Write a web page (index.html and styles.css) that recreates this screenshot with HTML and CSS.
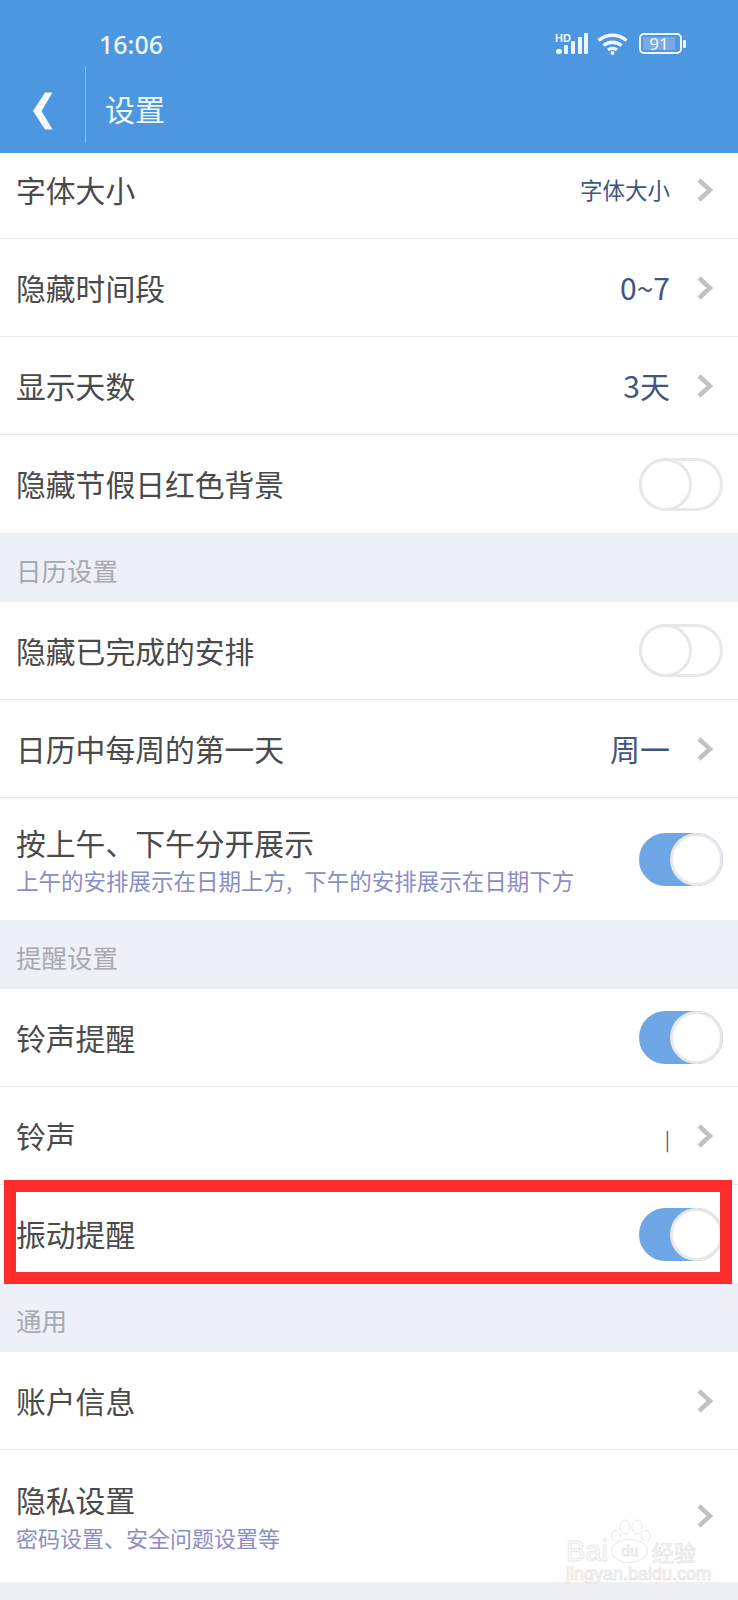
FILE: index.html
```html
<!DOCTYPE html>
<html lang="zh-CN">
  <head>
    <meta charset="utf-8" />
    <title>设置</title>
    <link rel="stylesheet" href="styles.css" />
  </head>
  <body>
    <header class="topbar">
      <div class="statusbar">
        <span class="time">16:06</span>
        <div class="status-icons">
          <svg class="signal" width="33" height="21" viewBox="0 0 33 21">
            <text x="0" y="9" class="hd">HD</text>
            <rect x="1" y="16" width="6" height="5" rx="2.5" />
            <rect x="9" y="12" width="4" height="9" rx="1" />
            <rect x="16" y="8" width="4" height="13" rx="1" />
            <rect x="23" y="4" width="4" height="17" rx="1" />
            <rect x="29" y="0" width="4" height="21" rx="1" />
          </svg>
          <svg class="wifi" width="31" height="22" viewBox="0 0 31 22">
            <path d="M1.5 7.5C9.5 0.5 21.5 0.5 29.5 7.5" />
            <path d="M6.5 12.5C11.5 8 19.5 8 24.5 12.5" />
            <path d="M11 17C13.5 15 17.5 15 20 17" />
            <circle cx="15.5" cy="20" r="2" />
          </svg>
          <div class="battery">
            <div class="battery-body"><span class="battery-level">91</span></div>
            <div class="battery-tip"></div>
          </div>
        </div>
      </div>
      <div class="navbar">
        <button class="back">
          <svg width="22" height="38" viewBox="0 0 22 38">
            <path d="M20.5 0.5H13L1 19L13 37.5H20.5L9.5 19Z" />
          </svg>
        </button>
        <h1>设置</h1>
      </div>
    </header>

    <div class="row first">
      <span class="label">字体大小</span>
      <span class="value small">字体大小</span>
      <svg class="chevron" viewBox="0 0 16 24"><path d="M2 2L13 12L2 22" /></svg>
    </div>
    <div class="row">
      <span class="label">隐藏时间段</span>
      <span class="value">0~7</span>
      <svg class="chevron" viewBox="0 0 16 24"><path d="M2 2L13 12L2 22" /></svg>
    </div>
    <div class="row">
      <span class="label">显示天数</span>
      <span class="value">3天</span>
      <svg class="chevron" viewBox="0 0 16 24"><path d="M2 2L13 12L2 22" /></svg>
    </div>
    <div class="row last">
      <span class="label">隐藏节假日红色背景</span>
      <div class="toggle"><div class="knob"></div></div>
    </div>

    <div class="section">日历设置</div>
    <div class="row">
      <span class="label">隐藏已完成的安排</span>
      <div class="toggle"><div class="knob"></div></div>
    </div>
    <div class="row">
      <span class="label">日历中每周的第一天</span>
      <span class="value">周一</span>
      <svg class="chevron" viewBox="0 0 16 24"><path d="M2 2L13 12L2 22" /></svg>
    </div>
    <div class="row tall last">
      <div class="label-group">
        <span class="label">按上午、下午分开展示</span>
        <span class="sub long">上午的安排展示在日期上方, 下午的安排展示在日期下方</span>
      </div>
      <div class="toggle on"><div class="knob"></div></div>
    </div>

    <div class="section">提醒设置</div>
    <div class="row">
      <span class="label">铃声提醒</span>
      <div class="toggle on"><div class="knob"></div></div>
    </div>
    <div class="row">
      <span class="label">铃声</span>
      <span class="value tick">|</span>
      <svg class="chevron" viewBox="0 0 16 24"><path d="M2 2L13 12L2 22" /></svg>
    </div>
    <div class="row last highlighted">
      <span class="label">振动提醒</span>
      <div class="toggle on"><div class="knob"></div></div>
      <div class="red-box"></div>
    </div>

    <div class="section">通用</div>
    <div class="row">
      <span class="label">账户信息</span>
      <svg class="chevron" viewBox="0 0 16 24"><path d="M2 2L13 12L2 22" /></svg>
    </div>
    <div class="row privacy last">
      <div class="label-group">
        <span class="label">隐私设置</span>
        <span class="sub">密码设置、安全问题设置等</span>
      </div>
      <svg class="chevron" viewBox="0 0 16 24"><path d="M2 2L13 12L2 22" /></svg>
      <div class="watermark">
        <svg class="paw" width="40" height="22" viewBox="0 0 40 22">
          <ellipse cx="5" cy="17" rx="4.5" ry="5.5" />
          <ellipse cx="14" cy="8" rx="5" ry="7" />
          <ellipse cx="26" cy="8" rx="5" ry="7" />
          <ellipse cx="35" cy="17" rx="4.5" ry="5.5" />
        </svg>
        <div class="mark-name">
          <span>Bai</span>
          <span class="mark-du">du</span>
          <span class="mark-cn">经验</span>
        </div>
        <div class="mark-url">jingyan.baidu.com</div>
      </div>
    </div>
  </body>
</html>
```

FILE: styles.css
```css
* {
  box-sizing: border-box;
}

body {
  margin: 0;
  height: 1600px;
  overflow: hidden;
  background-color: #eff0f4;
  font-family: "Noto Sans CJK SC", "Noto Sans", sans-serif;
}

.topbar {
  height: 153px;
  background-color: #4d96e0;
  color: #eef7ff;
}

.statusbar {
  display: flex;
  justify-content: space-between;
  align-items: center;
  height: 67px;
  padding: 20px 52px 0 99px;
}

.time {
  font-family: "Noto Sans", sans-serif;
  font-size: 25px;
  font-weight: 500;
}

.status-icons {
  display: flex;
  align-items: center;
  gap: 9px;
}

.signal {
  fill: #eef7ff;
}

.hd {
  font-family: "Liberation Sans", sans-serif;
  font-size: 11px;
  font-weight: bold;
}

.wifi path {
  fill: none;
  stroke: #eef7ff;
  stroke-width: 3.5;
}

.wifi circle {
  fill: #eef7ff;
}

.battery {
  display: flex;
  align-items: center;
  gap: 1px;
  margin-left: 2px;
}

.battery-body {
  width: 43px;
  height: 21px;
  padding: 2px;
  border: 2px solid #eef7ff;
  border-radius: 5px;
}

.battery-level {
  display: block;
  width: 32px;
  height: 13px;
  background-color: #7aa9e6;
  font-family: "Noto Sans", sans-serif;
  font-size: 17px;
  line-height: 13px;
  text-align: center;
}

.battery-tip {
  width: 3px;
  height: 8px;
  border-radius: 1px;
  background-color: #eef7ff;
}

.navbar {
  display: flex;
  align-items: center;
  height: 86px;
}

.back {
  display: flex;
  align-items: center;
  width: 86px;
  height: 76px;
  margin-bottom: 10px;
  padding: 12px 0 0 32px;
  border: 0;
  border-right: 1px solid #8dbcec;
  background: none;
}

.back svg {
  fill: #f5faff;
}

.navbar h1 {
  margin: 0 0 4px 19px;
  font-size: 30px;
  font-weight: 400;
  line-height: 1;
}

.row {
  position: relative;
  display: flex;
  align-items: center;
  height: 98px;
  padding: 0 25px 0 16px;
  background-color: #fff;
  border-bottom: 1px solid #e8e8e8;
}

.row.first {
  height: 86px;
  padding-bottom: 12px;
}

.row.last {
  border-bottom: 0;
}

.row.tall {
  height: 122px;
}

.row.privacy {
  height: 132px;
}

.label {
  padding-bottom: 2px;
  font-size: 29.8px;
  line-height: 40px;
  color: #4a4a4a;
}

.label-group {
  display: flex;
  flex-direction: column;
}

.sub {
  font-size: 22px;
  line-height: 32px;
  color: #8b8dc6;
}

.sub.long {
  font-size: 22.5px;
  word-spacing: 7px;
}

.value {
  margin-left: auto;
  padding-bottom: 2px;
  font-size: 30px;
  color: #3f5680;
}

.value.small {
  font-size: 22.5px;
}

.value.tick {
  padding: 6px 0 0;
  font-size: 19px;
}

.chevron {
  flex: none;
  width: 16px;
  height: 24px;
  margin-left: 27px;
  fill: none;
  stroke: #c2c2c2;
  stroke-width: 4.5;
}

.row > .label + .chevron,
.label-group + .chevron {
  margin-left: auto;
}

.toggle {
  position: relative;
  width: 84px;
  height: 53px;
  margin-left: auto;
  margin-right: -10px;
  border: 3px solid #e8e8e8;
  border-radius: 27px;
  background-color: #fff;
}

.knob {
  position: absolute;
  top: -3px;
  left: -3px;
  width: 53px;
  height: 53px;
  border: 3px solid #e8e8e8;
  border-radius: 50%;
  background-color: #fff;
}

.toggle.on {
  border-color: #6ea6e6;
  background-color: #6ea6e6;
}

.toggle.on .knob {
  left: auto;
  right: -3px;
}

.section {
  display: flex;
  align-items: center;
  height: 69px;
  padding: 3px 0 0 16px;
  background-color: #edf0f7;
  font-size: 25.5px;
  color: #a6aaae;
}

/* the red marker sits over the row, a bit wider than it */
.red-box {
  position: absolute;
  top: -5px;
  left: 4px;
  right: 6px;
  bottom: -1px;
  border: 12px solid #ff2d29;
}

.watermark {
  position: absolute;
  top: 69px;
  right: 42px;
  width: 130px;
  color: transparent;
  -webkit-text-stroke: 1px #e8e8e8;
  font-family: "Liberation Sans", sans-serif;
}

.paw {
  display: block;
  margin: 0 0 -2px 45px;
  fill: #fff;
  stroke: #e8e8e8;
}

.mark-name {
  display: flex;
  align-items: center;
  justify-content: space-between;
  font-size: 29px;
  line-height: 24px;
  white-space: nowrap;
}

.mark-du {
  width: 37px;
  height: 24px;
  border: 1px solid #e8e8e8;
  border-radius: 50%;
  font-size: 15px;
  line-height: 22px;
  text-align: center;
}

.mark-cn {
  font-family: "Noto Sans CJK SC", sans-serif;
  font-size: 22px;
}

.mark-url {
  margin-top: 3px;
  font-size: 18px;
  line-height: 16px;
  white-space: nowrap;
}
```
